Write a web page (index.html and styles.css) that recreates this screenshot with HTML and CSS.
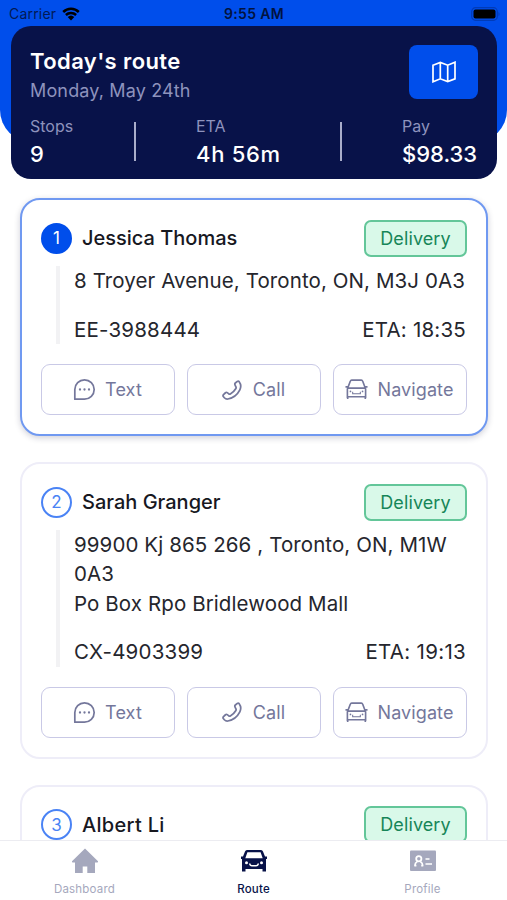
FILE: index.html
```html
<!DOCTYPE html>
<html lang="en">
<head>
<meta charset="utf-8">
<title>Today's route</title>
<link rel="stylesheet" href="styles.css">
</head>
<body>
<svg class="defs" aria-hidden="true">
  <symbol id="chat" viewBox="0 0 24 24"><path d="M1.9 22.1V12A10.1 10.1 0 1 1 12 22.1Z" fill="none" stroke="currentColor" stroke-width="1.8" stroke-linejoin="round"/><circle cx="7.3" cy="12" r="1.2"/><circle cx="12" cy="12" r="1.2"/><circle cx="16.7" cy="12" r="1.2"/></symbol>
  <symbol id="phone" viewBox="0 0 24 24"><path d="M16 3.6 18.4 1.7Q19.6 .9 20.6 2C22.6 4.6 23.2 8 21.4 11.8C18.6 17.4 13 21.7 7 22.8Q4.6 23.1 2.8 21.3L1.6 19.8Q.8 18.7 1.8 17.6L4.2 15.3Q5.2 14.4 6.3 15.2L8.2 16.7Q9.1 17.3 10 16.7C13 15 15.2 12.8 16.7 10.2Q17.2 9.3 16.7 8.4L15.6 5.8Q15 4.4 16 3.6Z" fill="none" stroke="currentColor" stroke-width="2.1" stroke-linejoin="round"/></symbol>
  <symbol id="car-line" viewBox="0 0 24 24"><path d="M2.5 20.8V11.4L5.6 3.2Q5.9 2.2 7 2.2H17Q18.1 2.2 18.4 3.2L21.5 11.4V20.8M2.5 19.6H21.5M3 10.6H21M.5 9.2H3.2M20.8 9.2H23.5M2.8 18.8V22M21.2 18.8V22" fill="none" stroke="currentColor" stroke-width="1.7"/><path d="M8 14.4V16.4H16V14.4" fill="none" stroke="currentColor" stroke-width="1.1"/><circle cx="5.7" cy="14" r=".9"/><circle cx="18.3" cy="14" r=".9"/></symbol>
</svg>
<div class="screen">
  <header class="top">
    <div class="status">
      <span class="carrier">Carrier
        <svg class="wifi" viewBox="0 0 18 14"><path d="M1.2 5A11.2 11.2 0 0 1 16.8 5M3.9 8A7.3 7.3 0 0 1 14.1 8" fill="none" stroke="currentColor" stroke-width="2.5"/><path d="M5.7 10A4.8 4.8 0 0 1 12.3 10L9 13.5Z"/></svg>
      </span>
      <span class="clock">9:55 AM</span>
      <svg class="battery" viewBox="0 0 30 14"><rect x=".7" y=".7" width="25.6" height="12.6" rx="3.8" fill="none" stroke="#003bb8" stroke-width="1.2"/><rect x="2.5" y="2.5" width="22" height="9" rx="2"/><path d="M27.5 4.7Q29.5 7 27.5 9.3Z" fill="#003bb8"/></svg>
    </div>
    <section class="summary">
      <div class="summary-head">
        <div>
          <h1 class="title">Today's route</h1>
          <p class="date">Monday, May 24th</p>
        </div>
        <button class="map-btn" aria-label="Map"><svg viewBox="0 0 24 22"><path d="M1 4.2 8.3 1.4 15.7 4.2 23 1.2V17.8L15.7 20.6 8.3 17.8 1 20.8ZM8.3 1.4V17.8M15.7 4.2V20.6" fill="none" stroke="#fff" stroke-width="1.7"/></svg></button>
      </div>
      <div class="stats">
        <div class="stat"><span class="label">Stops</span><span class="value">9</span></div>
        <i class="rule"></i>
        <div class="stat"><span class="label">ETA</span><span class="value eta-value">4h 56m</span></div>
        <i class="rule"></i>
        <div class="stat"><span class="label">Pay</span><span class="value">$98.33</span></div>
      </div>
    </section>
  </header>

  <main class="stops">
    <article class="card current">
      <div class="card-head"><span class="num">1</span><h2 class="name">Jessica Thomas</h2><span class="badge">Delivery</span></div>
      <div class="details">
        <p>8 Troyer Avenue, Toronto, ON, M3J 0A3</p>
        <div class="meta"><span>EE-3988444</span><span>ETA: 18:35</span></div>
      </div>
      <div class="actions">
        <button><svg><use href="#chat"/></svg>Text</button>
        <button><svg class="small"><use href="#phone"/></svg>Call</button>
        <button><svg><use href="#car-line"/></svg>Navigate</button>
      </div>
    </article>
    <article class="card">
      <div class="card-head"><span class="num">2</span><h2 class="name">Sarah Granger</h2><span class="badge">Delivery</span></div>
      <div class="details">
        <p>99900 Kj 865 266 , Toronto, ON, M1W<br>0A3<br>Po Box Rpo Bridlewood Mall</p>
        <div class="meta"><span>CX-4903399</span><span class="wide">ETA: 19:13</span></div>
      </div>
      <div class="actions">
        <button><svg><use href="#chat"/></svg>Text</button>
        <button><svg class="small"><use href="#phone"/></svg>Call</button>
        <button><svg><use href="#car-line"/></svg>Navigate</button>
      </div>
    </article>
    <article class="card">
      <div class="card-head"><span class="num">3</span><h2 class="name wide">Albert Li</h2><span class="badge">Delivery</span></div>
    </article>
  </main>

  <nav class="tabs">
    <a class="tab"><svg viewBox="0 0 28 28"><path d="M14 1.5 27 14.2Q27.5 15.5 26 15.5H24V26H16.3V19.5H11.7V26H4V15.5H2Q.5 15.5 1 14.2Z"/></svg>Dashboard</a>
    <a class="tab active"><svg viewBox="0 0 28 28"><path fill-rule="evenodd" d="M7 3H21Q22.5 3 23 4.5L25 9.5H27V12H26V24.5H22.5V22H5.5V24.5H2V12H1V9.5H3L5 4.5Q5.5 3 7 3ZM7.4 5.3 5.3 11.3H22.7L20.6 5.3Z"/><circle cx="6.5" cy="15.7" r="1.5" fill="#fff"/><circle cx="21.5" cy="15.7" r="1.5" fill="#fff"/><path d="M9.7 16.5Q10 18.7 12 18.7H16Q18 18.7 18.3 16.5" fill="none" stroke="#fff" stroke-width="1.6"/></svg>Route</a>
    <a class="tab"><svg viewBox="0 0 28 28"><rect x="1" y="3.5" width="26" height="20.5" rx="1"/><circle cx="9.8" cy="11.8" r="2.6" fill="none" stroke="#fff" stroke-width="1.8"/><path d="M6 19V18Q6 16 8.2 14.8M13.6 19V18Q13.6 16 11.4 14.8M5.3 18.6H7.4M12.2 18.6H14.3M16.5 12H20.5M16.5 17H23" fill="none" stroke="#fff" stroke-width="1.7"/></svg>Profile</a>
  </nav>
</div>
</body>
</html>
```

FILE: styles.css
```css
* { box-sizing: border-box; }
body { margin: 0; background: #fff; font-family: Inter, "Liberation Sans", sans-serif; }
h1, h2, p { margin: 0; }
button { font: inherit; padding: 0; margin: 0; }
svg { fill: currentColor; flex: none; }
.defs { position: absolute; width: 0; height: 0; }
.screen { height: 900px; display: flex; flex-direction: column; overflow: hidden; }

.top { height: 142px; flex: none; background: #004eeb; border-radius: 0 0 32px 32px; padding: 0 10px 0 11px; }
.status { height: 26px; display: grid; grid-template-columns: 1fr auto 1fr; align-items: center; padding-top: 1px; color: #000; font-size: 14px; margin: 0 -2px; }
.carrier { display: flex; align-items: center; gap: 6px; color: #021a55; letter-spacing: .2px; }
.wifi { width: 18px; height: 14px; color: #000; }
.clock { font-weight: 600; letter-spacing: .35px; color: #02133f; }
.battery { width: 30px; height: 14px; justify-self: end; margin-right: -2px; }

.summary { height: 153px; background: #081249; border-radius: 20px; padding: 18px 19px 0; color: #fff; }
.summary-head { display: flex; justify-content: space-between; height: 72px; }
.title { font-size: 22px; line-height: 34px; font-weight: 600; letter-spacing: .4px; }
.date { font-size: 18px; line-height: 26px; color: #8e93bd; letter-spacing: .15px; }
.map-btn { width: 69px; height: 54px; border: 0; border-radius: 8px; background: #004eeb; display: grid; place-items: center; margin: 1px 0 0; }
.map-btn svg { width: 24px; height: 22px; }
.stats { display: grid; grid-template-columns: 104px 62px 144px 62px 1fr; }
.stat { display: flex; flex-direction: column; white-space: nowrap; }
.label { font-size: 16px; line-height: 21px; color: #8e93bd; }
.value { font-size: 22px; line-height: 34px; font-weight: 500; }
.eta-value { letter-spacing: .7px; }
.rule { width: 2px; height: 39px; margin-top: 6px; background: #a9adca; }

.stops { flex: 1; min-height: 0; overflow: hidden; padding: 56.4px 19px 0 20px; display: flex; flex-direction: column; gap: 26px; }
.card { flex: none; border: 2px solid #eeedf8; border-radius: 20px; padding: 19px; background: #fff; }
.current { border-color: #7099f1; box-shadow: 0 2px 6px rgba(20, 20, 60, .2); }
.card-head { display: flex; align-items: center; height: 37.5px; }
.num { width: 31px; height: 31px; border-radius: 50%; border: 2px solid #4a83f5; color: #4a83f5; display: grid; place-items: center; font-size: 17px; }
.current .num { background: #004eeb; border-color: #004eeb; color: #fff; }
.name { font-size: 20px; line-height: 30px; font-weight: 500; color: #17181f; margin-left: 10px; }
.wide { letter-spacing: .3px; }
.badge { margin-left: auto; width: 103px; height: 37.2px; border: 2px solid #63c699; border-radius: 7px; background: #d9f9e9; color: #168658; display: grid; place-items: center; font-size: 18px; letter-spacing: .1px; }
.details { border-left: 4px solid #f2f2f4; margin: 9.3px 0 20px 15px; padding: 0 1px 0 14px; color: #25262d; font-size: 20.5px; line-height: 29.3px; letter-spacing: .1px; white-space: nowrap; }
.meta { display: flex; justify-content: space-between; margin-top: 19.2px; }
.meta span { letter-spacing: .2px; }
.meta .wide { letter-spacing: .3px; }
.actions { display: grid; grid-template-columns: repeat(3, 1fr); gap: 12px; }
.actions button { height: 51.4px; border: 1px solid #c9c9e6; border-radius: 9px; background: #fff; color: #74779b; font-size: 18px; display: flex; align-items: center; justify-content: center; gap: 9px; letter-spacing: .1px; padding-right: 1px; }
.actions svg { width: 23px; height: 23px; }
.actions .small { width: 20px; height: 20px; margin-right: 2px; }

.tabs { flex: none; height: 60px; display: grid; grid-template-columns: repeat(3, 1fr); border-top: 1px solid #ececf1; background: #fff; }
.tab { display: flex; flex-direction: column; align-items: center; color: #a5a8bd; font-size: 11.5px; line-height: 14px; letter-spacing: .2px; padding-top: 6px; gap: 7px; }
.tab svg { width: 28px; height: 28px; }
.active { color: #081249; font-weight: 500; }
```
